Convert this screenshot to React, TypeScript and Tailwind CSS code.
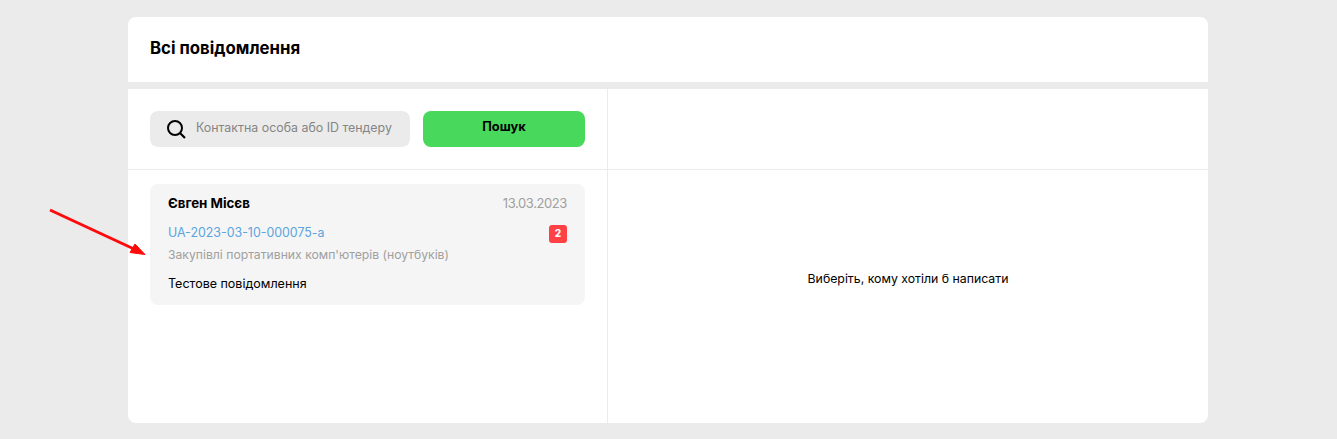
export default function App() {
  return (
    <div className="relative h-[439px] overflow-hidden bg-[#ebebeb] pl-[128px] pt-[17px] font-['Inter',sans-serif] text-black">
      <svg className="absolute left-[45px] top-[205px]" width="105" height="55" viewBox="0 0 105 55">
        <path d="M5 5 L89 44" stroke="#ff0a0a" strokeWidth="3" fill="none" />
        <path d="M100 49.5 L85 47.5 L90 39 Z" fill="#ff0a0a" stroke="#ff0a0a" strokeWidth="1" />
      </svg>

      <div className="flex h-[406px] w-[1080px] flex-col gap-[7px] overflow-hidden rounded-lg">
        <div className="flex h-[65px] items-center bg-white px-[22px] pb-[3px]">
          <h1 className="text-[16.8px] font-bold leading-6">Всі повідомлення</h1>
        </div>

        <div className="flex flex-1 bg-white">
          <div className="w-[480px] border-r border-[#ebebeb]">
            <div className="flex h-[81px] gap-[13px] border-b border-[#ebebeb] pl-[22px] pt-[22px]">
              <div className="flex h-9 w-[260px] items-center rounded-lg bg-[#ebebeb] pl-[16px]">
                <svg width="20" height="20" viewBox="0 0 20 20" fill="none" className="shrink-0">
                  <circle cx="9" cy="9" r="7" stroke="#000" strokeWidth="2" />
                  <path d="M14 14 L19 19" stroke="#000" strokeWidth="2.2" />
                </svg>
                <span className="ml-[10px] whitespace-nowrap pb-[1px] text-[12.4px] text-[#858585]">Контактна особа або ID тендеру</span>
              </div>
              <button className="h-9 w-[162px] rounded-lg bg-[#48d85c] pb-[5px] text-[12.8px] font-bold">Пошук</button>
            </div>

            <div className="ml-[22px] mt-[14px] h-[121px] w-[435px] rounded-lg bg-[#f5f5f5] px-[18px] pt-[9px]">
              <div className="flex items-center justify-between leading-5">
                <span className="text-[13.3px] font-bold">Євген Місєв</span>
                <span className="text-[13px] tracking-[-0.4px] text-[#a0a0a0]">13.03.2023</span>
              </div>
              <div className="mt-[10px] flex items-start justify-between">
                <div>
                  <div className="text-[12.4px] leading-5 text-[#5ba4de]">UA-2023-03-10-000075-a</div>
                  <div className="mt-[2px] text-[12.2px] leading-5 text-[#a0a0a0]">Закупівлі портативних комп'ютерів (ноутбуків)</div>
                </div>
                <span className="mt-[2px] flex h-[18px] w-[18px] items-center justify-center rounded-[3px] bg-[#ff4146] pb-[2px] text-[10px] font-extrabold text-white">2</span>
              </div>
              <div className="mt-[9px] text-[12.5px] leading-5">Тестове повідомлення</div>
            </div>
          </div>

          <div className="flex flex-1 flex-col">
            <div className="h-[81px] border-b border-[#ebebeb]" />
            <div className="flex flex-1 items-center justify-center text-[12.3px]">
              <span className="mb-[35px]">Виберіть, кому хотіли б написати</span>
            </div>
          </div>
        </div>
      </div>
    </div>
  );
}
